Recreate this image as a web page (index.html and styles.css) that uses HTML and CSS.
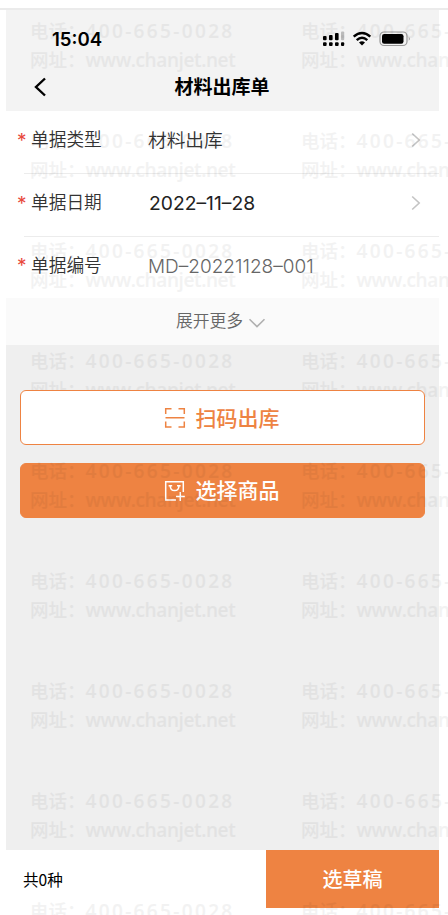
FILE: index.html
```html
<!DOCTYPE html>
<html lang="zh-CN">
<head>
<meta charset="utf-8">
<title>材料出库单</title>
<link rel="stylesheet" href="styles.css">
</head>
<body>
<div class="page">
  <main class="phone">
    <header class="header">
      <div class="status">
        <span class="time">15:04</span>
        <svg class="status-icons" width="90" height="18" viewBox="0 0 90 18">
          <g fill="#000">
            <rect x="1" y="6" width="3.6" height="4.2" rx="1"/><rect x="7" y="5" width="3.6" height="5.2" rx="1"/><rect x="13" y="3" width="3.6" height="7.2" rx="1"/>
            <rect x="1" y="12.2" width="3.6" height="3.8" rx="1"/><rect x="7" y="12.2" width="3.6" height="3.8" rx="1"/><rect x="13" y="12.2" width="3.6" height="3.8" rx="1"/><rect x="19" y="12.2" width="3.2" height="3.8" rx="1"/>
          </g>
          <rect x="19" y="1.5" width="3.2" height="8.7" rx="1" fill="#bbb"/>
          <g fill="none" stroke="#000" stroke-width="2.5">
            <path d="M31.7 6.6Q40 -.5 48.3 6.6"/><path d="M34.7 10.1Q40 5.5 45.3 10.1"/>
          </g>
          <path d="M37 12.4Q40 10.2 43 12.4L40 15.6Z"/>
          <rect x="58" y="2" width="27" height="13.5" rx="4" fill="#f3f3f3" stroke="#999" stroke-width="1.2"/>
          <rect x="60" y="4" width="21.5" height="9.7" rx="2.2"/>
          <path d="M86.8 6.6Q88.6 8.7 86.8 10.8Z" fill="#888"/>
        </svg>
      </div>
      <div class="titlebar">
        <svg class="back" width="14" height="20" viewBox="0 0 14 20"><path d="M12 1.5L3 10L12 18.5" fill="none" stroke="#000" stroke-width="2.4"/></svg>
        <h1>材料出库单</h1>
      </div>
    </header>
    <section class="form">
      <div class="row"><i>*</i><label>单据类型</label><span class="value cjk">材料出库</span><svg class="arrow" width="10" height="16" viewBox="0 0 10 16"><path d="M1.2 1.5L8.2 8L1.2 14.5" fill="none" stroke="#c4c4c4" stroke-width="1.6"/></svg></div>
      <div class="row"><i>*</i><label>单据日期</label><span class="value date">2022–11–28</span><svg class="arrow" width="10" height="16" viewBox="0 0 10 16"><path d="M1.2 1.5L8.2 8L1.2 14.5" fill="none" stroke="#c4c4c4" stroke-width="1.6"/></svg></div>
      <div class="row"><i>*</i><label>单据编号</label><span class="value code">MD–20221128–001</span></div>
    </section>
    <div class="more"><span>展开更多</span><svg width="18" height="12" viewBox="0 0 18 12"><path d="M1.5 2.2L9 9.6L16.5 2.2" fill="none" stroke="#b0b0b0" stroke-width="1.6"/></svg></div>
    <section class="actions">
      <div class="btn outline">
        <svg width="22" height="22" viewBox="0 0 22 22" fill="none" stroke="#ee8342" stroke-width="1.5"><path d="M1.7 7V1.7H7.5M14.5 1.7H20.3V7M1.7 14.5V20H7.5M14.5 20H20.3V14.5M1.5 10.8H20.5"/></svg>
        <span>扫码出库</span>
      </div>
      <div class="btn solid">
        <svg width="22" height="22" viewBox="0 0 22 22" fill="none" stroke="#fff" stroke-width="1.5"><path d="M12 20H1.7V1.7H19.3V12M16.3 12V21M12 16.5H20.8M4.6 5.7H8.2M13 5.7H16.6M6.2 5.7Q6.4 10.6 10.6 10.6T15 5.7"/></svg>
        <span>选择商品</span>
      </div>
    </section>
    <footer class="footer"><span class="count">共0种</span><div class="draft">选草稿</div></footer>
  </main>
  <div class="watermarks" id="marks"></div>
</div>
<script src="marks.js"></script>
</body>
</html>
```
FILE: styles.css
```css
* { box-sizing: border-box; }
body { margin: 0; background: #fff; font-family: "Noto Sans CJK SC", sans-serif; }
.page { position: relative; width: 448px; height: 915px; overflow: hidden; border-top: 8px solid #fff; }
.page::before { content: ""; display: block; height: 2px; background: #ebebeb; }
.phone { width: 433px; height: 898px; margin-left: 6px; background: #efefef; display: flex; flex-direction: column; }
.header { height: 101px; background: #f3f3f3; }
.status { height: 53px; display: flex; justify-content: space-between; padding: 0 27px 0 46px; }
.time { font: 600 18.6px/59px Inter, sans-serif; }
.status-icons { margin-top: 20px; }
.titlebar { height: 48px; display: grid; grid-template-columns: 60px 1fr 60px; align-items: center; }
.back { margin-left: 27px; }
h1 { margin: 0; padding: 0 1px 2px 0; font-size: 19px; line-height: 28px; font-weight: 700; text-align: center; }
.form { height: 187px; background: #fff; }
.row { height: 63px; margin-left: 18px; display: flex; align-items: center; border-bottom: 1px solid #ececec; padding-right: 18px; }
.row:last-child { height: 61px; border: 0; }
.row i { width: 14px; margin-left: -7px; font: 19px/20px Inter, sans-serif; color: #e8483c; padding-bottom: 3px; }
.row label { width: 117px; font-size: 17.7px; line-height: 26px; color: #333; font-weight: 350; padding-bottom: 8px; }
.value { flex: 1; line-height: 26px; white-space: nowrap; }
.cjk { font-size: 18.7px; color: #333; padding-bottom: 6px; font-weight: 350; }
.date { font-family: Inter, sans-serif; font-size: 19.3px; color: #222; padding: 0 0 4px 1px; }
.code { font-family: Inter, sans-serif; font-size: 19px; color: #666; font-weight: 350; padding-bottom: 2px; }
.arrow { margin-bottom: 4px; }
.more { height: 47px; background: #fafafa; display: flex; align-items: center; justify-content: center; gap: 5px; padding-right: 3px; font-size: 16.8px; color: #666; font-weight: 350; }
.more svg { margin-top: 2px; }
.more span { line-height: 24px; padding-bottom: 3px; }
.actions { flex: 1; padding: 45px 14px 0; display: flex; flex-direction: column; gap: 18px; }
.btn { height: 55px; border-radius: 6px; display: flex; align-items: center; justify-content: center; gap: 10px; padding-right: 2px; border: 1px solid #ee8342; font-size: 21px; line-height: 30px; font-weight: 500; }
.btn span { padding-bottom: 2px; }
.outline { position: relative; z-index: 1; background: #fff; color: #ee8342; }
.solid { background: #ee8342; color: #fff; }
.solid span { padding-bottom: 3px; }
.footer { height: 58px; background: #fff; display: flex; justify-content: space-between; }
.count { padding-left: 17px; font-size: 15.6px; line-height: 58px; }
.draft { width: 173px; background: #ee8342; color: #fff; text-align: center; font-size: 20px; line-height: 57px; font-weight: 500; }
.watermarks { position: absolute; top: 8px; left: 30px; display: grid; grid-template-columns: 271px 271px; grid-auto-rows: 110px; color: #000; opacity: .048; font: 500 18.5px/30px "Open Sans", "Noto Sans CJK SC", sans-serif; pointer-events: none; }
.mark { white-space: nowrap; }
.mark div { display: flex; height: 29px; }
.mark b { font-weight: 500; width: 55.5px; flex: none; -webkit-text-stroke: .2px #000; }
.mark span { font-size: 19px; font-weight: 600; -webkit-text-stroke: .2px #000; }
.tel { letter-spacing: 2.35px; }
.url { letter-spacing: -.4px; }
```
FILE: marks.js
```js
const marks = document.getElementById("marks");
for (let i = 0; i < 18; i++) {
  const mark = document.createElement("div");
  mark.className = "mark";
  mark.innerHTML = '<div><b>电话：</b><span class="tel">400-665-0028</span></div><div><b>网址：</b><span class="url">www.chanjet.net</span></div>';
  marks.appendChild(mark);
}
```
